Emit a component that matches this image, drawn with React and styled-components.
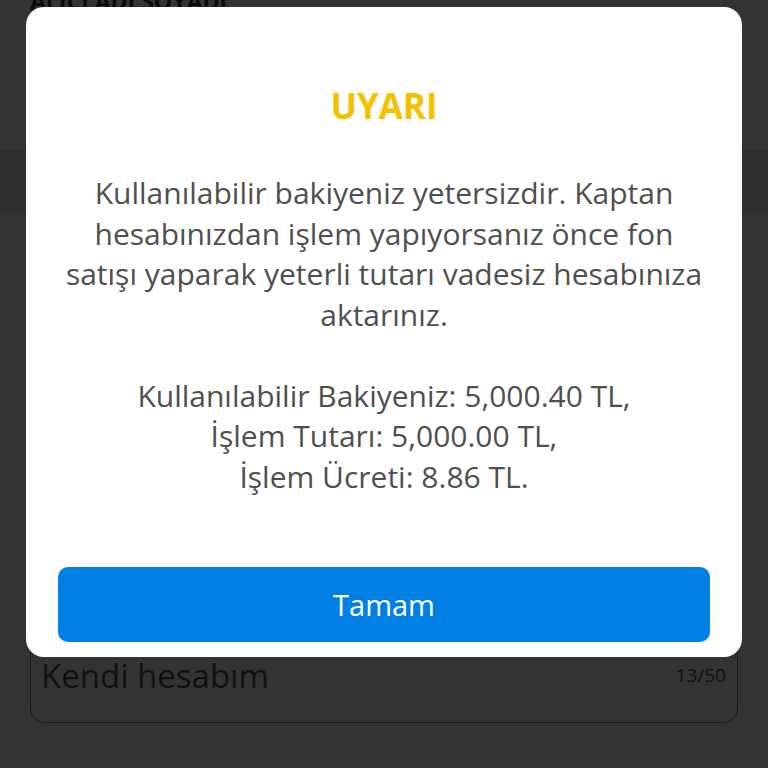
import React from 'react'
import styled, { createGlobalStyle } from 'styled-components'

const GlobalStyle = createGlobalStyle`
    html, body {
        margin: 0;
        padding: 0;
        background: #ffffff;
    }
    body {
        font-family: "Open Sans", "Noto Sans", sans-serif;
    }
`;

const Screen = styled.div`
    position: relative;
    width: 768px;
    height: 768px;
    overflow: hidden;
    background: #ffffff;
`;

const Form = styled.div`
    display: flex;
    flex-direction: column;
`;

const FieldLabel = styled.div`
    margin-top: -14px;
    padding-left: 30px;
    font-size: 23px;
    line-height: 30px;
    font-weight: 700;
    color: #3a3a3a;
`;

const Band = styled.div`
    margin-top: 134px;
    height: 65px;
    background: #e8e8e8;
`;

const InputBox = styled.div`
    margin: 372px 30px 0;
    height: 136px;
    border: 1px solid #8a8a8a;
    border-radius: 14px;
    display: flex;
    align-items: flex-end;
    justify-content: space-between;
    padding: 0 11px 24px 10px;
    box-sizing: border-box;
`;

const InputText = styled.span`
    font-size: 33px;
    color: #5a5a5a;
`;

const Counter = styled.span`
    font-size: 19px;
    color: #5a5a5a;
    padding-bottom: 10px;
`;

const Overlay = styled.div`
    position: absolute;
    inset: 0;
    background: rgba(0, 0, 0, 0.8);
    display: flex;
    justify-content: center;
    align-items: flex-start;
    padding-top: 7px;
`;

const Dialog = styled.div`
    width: 716px;
    background: #fff;
    border-radius: 18px;
    padding: 76px 32px 15px;
    box-sizing: border-box;
    display: flex;
    flex-direction: column;
    align-items: center;
`;

const Title = styled.h2`
    margin: 0;
    font-size: 35px;
    line-height: 46px;
    font-weight: 700;
    color: #f2c200;
`;

const Message = styled.p`
    margin: 44px 0 0;
    font-size: 30px;
    line-height: 40.5px;
    color: #4f4f4f;
    text-align: center;
`;

const Button = styled.button`
    margin-top: 70px;
    width: 100%;
    height: 75px;
    border: none;
    border-radius: 10px;
    background: #0180e4;
    color: #fff;
    font-family: "Open Sans", "Noto Sans", sans-serif;
    font-size: 29px;
    font-weight: 500;
`;

export default function App() {
    return (
        <Screen>
            <GlobalStyle />
            <Form>
                <FieldLabel>ALICI ADI SOYADI</FieldLabel>
                <Band />
                <InputBox>
                    <InputText>Kendi hesabım</InputText>
                    <Counter>13/50</Counter>
                </InputBox>
            </Form>
            <Overlay>
                <Dialog>
                    <Title>UYARI</Title>
                    <Message>
                        Kullanılabilir bakiyeniz yetersizdir. Kaptan<br />
                        hesabınızdan işlem yapıyorsanız önce fon<br />
                        satışı yaparak yeterli tutarı vadesiz hesabınıza<br />
                        aktarınız.<br />
                        <br />
                        Kullanılabilir Bakiyeniz: 5,000.40 TL,<br />
                        İşlem Tutarı: 5,000.00 TL,<br />
                        İşlem Ücreti: 8.86 TL.
                    </Message>
                    <Button>Tamam</Button>
                </Dialog>
            </Overlay>
        </Screen>
    )
}
